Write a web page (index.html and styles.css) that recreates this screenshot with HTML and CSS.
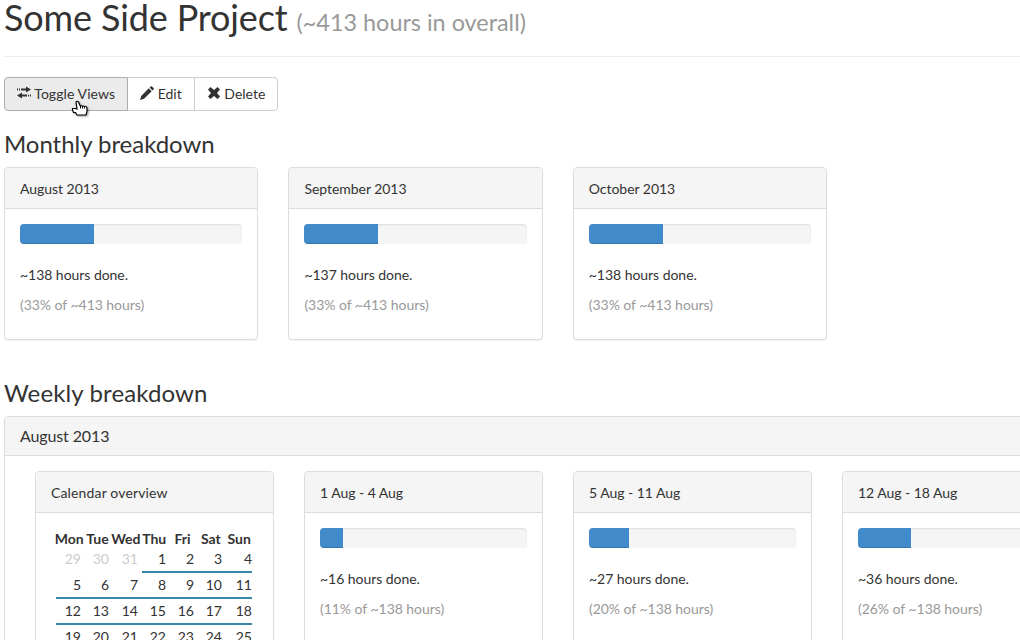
FILE: index.html
```html
<!DOCTYPE html>
<html lang="en">
<head>
<meta charset="utf-8">
<title>Some Side Project</title>
<link rel="stylesheet" href="styles.css">
</head>
<body>
<main class="container">
  <header class="page-header"><h1>Some Side Project <small>(~413 hours in overall)</small></h1></header>
  <div class="btn-group">
    <button class="btn active"><svg class="icon" viewBox="0 0 14 14"><path d="M0 2.500h1v2H0zM2 2.500h1v2H2zM4 2.500h5V.5l5 3-5 3v-2H4zM13 8.500h1v2h-1zM11 8.500h1v2h-1zM10 8.500H5v-2l-5 3 5 3v-2h5z"/></svg> Toggle Views</button>
    <button class="btn"><svg class="icon" viewBox="0 0 14 14"><path d="M0 14l1.2-4.1L8.8 2.3l2.9 2.9-7.6 7.6zM9.6 1.5l1-1q.7-.7 1.4 0l1.5 1.5q.7.7 0 1.4l-1 1z"/></svg> Edit</button>
    <button class="btn"><svg class="icon" viewBox="0 0 14 14"><path d="M3.500 1L7 4 10.500 1 13 3.500 10 7l3 3.500-2.500 2.500L7 10 3.500 13 1 10.500 4 7 1 3.500z"/></svg> Delete</button>
    <svg class="pointer" viewBox="0 0 18 18"><path d="M5 2q1.500-1.500 2.500 0l1.500 3.500 5.500 1q1.500 0 1.500 1.500v3.500l-1 3.500H6L4.500 12.500H2.500L1.500 10V8.500H4.500l1.500.5z"/><path class="fingers" d="M9.500 5.500v3M11.500 6v2.500M13.500 6.500v2"/></svg>
  </div>
  <h3>Monthly breakdown</h3>
  <section class="row monthly">
    <article class="panel"><h4 class="heading">August 2013</h4><div class="body"><div class="progress"><div class="bar" style="width:33.3%"></div></div><p>~138 hours done.</p><p class="muted">(33% of ~413 hours)</p></div></article>
    <article class="panel"><h4 class="heading">September 2013</h4><div class="body"><div class="progress"><div class="bar" style="width:33.3%"></div></div><p>~137 hours done.</p><p class="muted">(33% of ~413 hours)</p></div></article>
    <article class="panel"><h4 class="heading">October 2013</h4><div class="body"><div class="progress"><div class="bar" style="width:33.3%"></div></div><p>~138 hours done.</p><p class="muted">(33% of ~413 hours)</p></div></article>
  </section>
  <h3 class="weekly-title">Weekly breakdown</h3>
  <section class="panel month">
    <h4 class="heading title">August 2013</h4>
    <div class="body"><div class="row weekly">
      <article class="panel"><h4 class="heading overview">Calendar overview</h4><div class="body">
        <div class="calendar-head"><b>Mon</b><b>Tue</b><b>Wed</b><b>Thu</b><b>Fri</b><b>Sat</b><b>Sun</b></div>
        <div class="calendar">
          <span class="outside">29</span><span class="outside">30</span><span class="outside">31</span><span>1</span><span>2</span><span>3</span><span>4</span>
          <span>5</span><span>6</span><span>7</span><span>8</span><span>9</span><span>10</span><span>11</span>
          <span>12</span><span>13</span><span>14</span><span>15</span><span>16</span><span>17</span><span>18</span>
          <span>19</span><span>20</span><span>21</span><span>22</span><span>23</span><span>24</span><span>25</span>
        </div>
      </div></article>
      <article class="panel"><h4 class="heading">1 Aug - 4 Aug</h4><div class="body"><div class="progress"><div class="bar" style="width:11%"></div></div><p>~16 hours done.</p><p class="muted">(11% of ~138 hours)</p></div></article>
      <article class="panel"><h4 class="heading">5 Aug - 11 Aug</h4><div class="body"><div class="progress"><div class="bar" style="width:19.5%"></div></div><p>~27 hours done.</p><p class="muted">(20% of ~138 hours)</p></div></article>
      <article class="panel"><h4 class="heading">12 Aug - 18 Aug</h4><div class="body"><div class="progress"><div class="bar" style="width:25.7%"></div></div><p>~36 hours done.</p><p class="muted">(26% of ~138 hours)</p></div></article>
    </div></div>
  </section>
</main>
</body>
</html>
```
FILE: styles.css
```css
* { box-sizing: border-box; }
html { height: 100%; overflow: hidden; }
body { margin: 0; height: 640px; overflow: hidden; background: #fff; color: #333; font: 14px/20px Lato, sans-serif; }
.container { width: 1108px; margin-left: 4px; }
.page-header { height: 57px; border-bottom: 1px solid #eee; margin-bottom: 20px; }
h1, h3, h4, p { margin: 0; font-weight: 400; }
h1 { font-size: 36px; line-height: 34px; letter-spacing: -.14px; }
h1 small { font-size: 23.4px; color: #999; line-height: 1; letter-spacing: 0; }
h3 { font-size: 24px; line-height: 26px; margin: 20px 0 10px; letter-spacing: -.04px; }
.weekly-title { letter-spacing: .12px; }
.btn-group { display: flex; width: max-content; position: relative; }
.btn { height: 34px; padding: 6px 12px; border: 1px solid #ccc; background: #fff; color: #333; font: inherit; margin-left: -1px; white-space: nowrap; }
.btn:first-child { margin-left: 0; border-radius: 4px 0 0 4px; letter-spacing: .08px; }
.btn:nth-child(3) { border-radius: 0 4px 4px 0; }
.btn.active { background: #ebebeb; border-color: #adadad; z-index: 1; }
.icon { width: 14px; height: 14px; fill: #333; vertical-align: -1px; }
.pointer { position: absolute; z-index: 2; left: 67px; top: 23px; width: 18px; height: 18px; fill: #fff; stroke: #000; stroke-width: 1.2; filter: drop-shadow(1px 1px 1px #0006); }
.fingers { fill: none; stroke-width: 1; }
.row { display: grid; gap: 30px; }
.monthly { grid-template-columns: repeat(3, 254.4px); margin-bottom: 40px; }
.weekly { grid-template-columns: repeat(4, 239px); margin-left: 15px; }
.panel { border: 1px solid #ddd; border-radius: 4px; background: #fff; box-shadow: 0 1px 1px rgba(0,0,0,.05); }
.heading { padding: 11px 15px 9px; font-size: 14px; line-height: 20px; letter-spacing: -.04px; background: #f5f5f5; border-bottom: 1px solid #ddd; border-radius: 3px 3px 0 0; }
.title { padding: 10px 15px; font-size: 16px; line-height: 18px; letter-spacing: -.12px; }
.overview { letter-spacing: .15px; }
.body { padding: 15px; }
.monthly .body { height: 130px; }
.progress { height: 20px; margin-bottom: 21px; overflow: hidden; border-radius: 4px; background: #f5f5f5; box-shadow: inset 0 1px 2px rgba(0,0,0,.1); }
.bar { height: 100%; background: #428bca; box-shadow: inset 0 -1px 0 rgba(0,0,0,.15); }
p { margin-bottom: 10px; letter-spacing: -.04px; }
.muted { color: #999; }
.calendar-head { display: grid; grid-template-columns: repeat(7, 28.35px); margin-left: 4px; margin-top: 1px; text-align: center; line-height: 20px; }
.calendar-head b { display: flex; justify-content: center; }
.calendar { display: grid; grid-template-columns: 29px 28px 29px 28px 28px 28px 26px; margin-left: 5px; }
.calendar span { height: 24px; margin-bottom: 2px; text-align: right; padding-right: 4px; border-bottom: 2px solid #3a87ad; }
.calendar span:nth-child(7n) { padding-right: 0; }
.calendar .outside { color: #ccc; border-color: transparent; }
```
